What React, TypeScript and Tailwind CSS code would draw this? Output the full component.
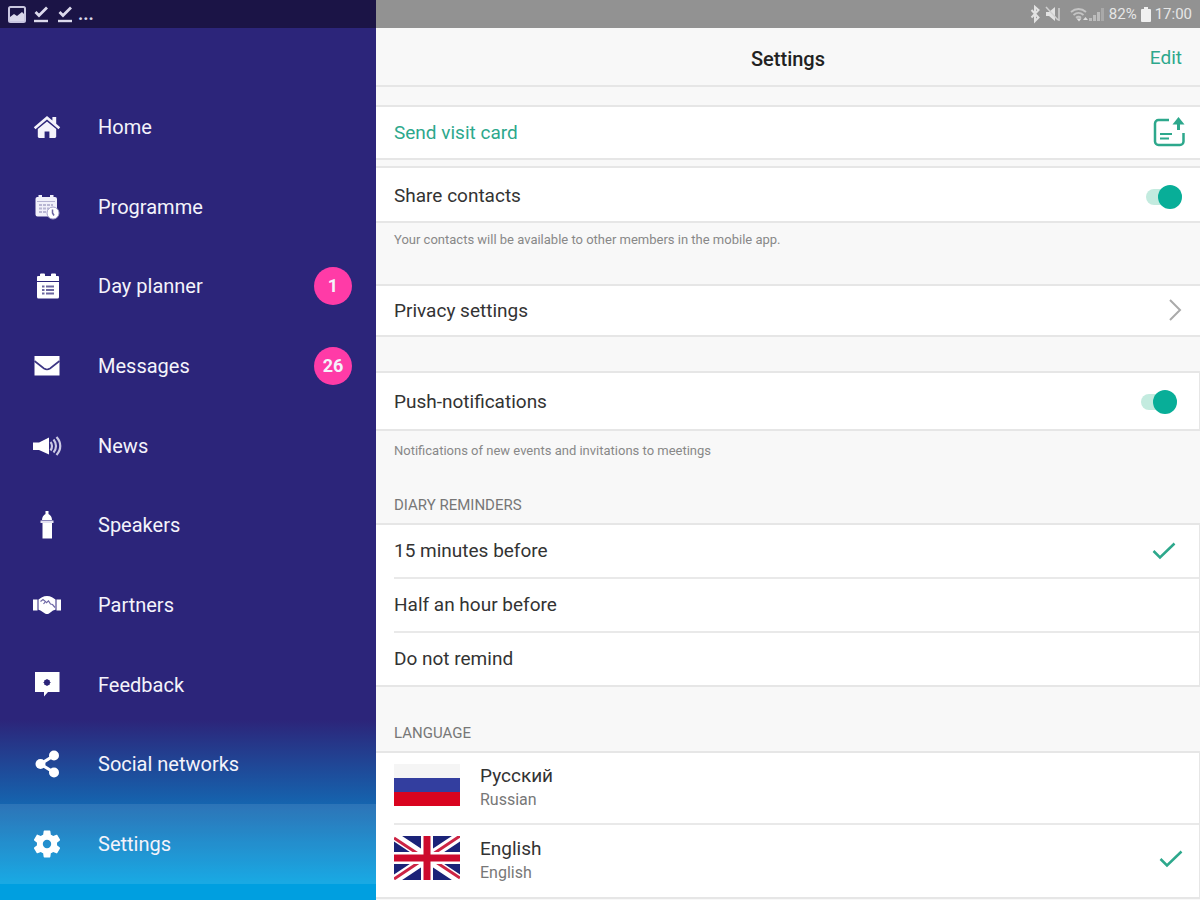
import React, { useState } from "react";
import { clsx } from "clsx";

interface IconProps {
  className?: string;
}

interface NavItem {
  label: string;
  href: string;
  icon: React.FC<IconProps>;
  badge?: number;
}

const HomeIcon: React.FC<IconProps> = ({ className }) => (
  <svg viewBox="-1 -2 30 28" className={className} fill="currentColor" aria-hidden="true">
    <path d="M14 1 .8 12.2l1.700 2L14 4.500l11.500 9.700 1.700-2-4-3.400V2h-3.800v3.600z" />
    <path d="M14 6.400 4.800 14v7.600c0 .8.6 1.400 1.400 1.400h5.400v-6.600h4.800V23h5.400c.8 0 1.400-.6 1.400-1.400V14z" />
  </svg>
);

const ProgrammeIcon: React.FC<IconProps> = ({ className }) => (
  <svg viewBox="-1 -1 28 28" className={className} aria-hidden="true">
    <path
      fill="#f1f0fa"
      d="M3 3h1.500V1H8v2h8V1h3.500v2H21a2 2 0 0 1 2 2v15.500a2 2 0 0 1-2 2H3.500a2 2 0 0 1-2-2V5a2 2 0 0 1 1.500-2z"
    />
    <path stroke="#b5b2d2" d="M3 7.500h18" />
    <path stroke="#b9b6d3" strokeWidth="2" strokeDasharray="3 1" d="M5 11h14M5 14.500h10M5 18h8" />
    <circle cx="19" cy="19" r="6" fill="#fff" stroke="#a5a1ca" strokeWidth="1" />
    <path fill="none" stroke="#6a649f" strokeWidth="1.500" d="M18.500 15.500V19l1.500 2.500" />
  </svg>
);

const PlannerIcon: React.FC<IconProps> = ({ className }) => (
  <svg viewBox="-1 -1 24 28" className={className} aria-hidden="true">
    <path
      fill="#fff"
      d="M2 3h2V1.500a1 1 0 0 1 1-1h3a1 1 0 0 1 1 1V3h6V1.500a1 1 0 0 1 1-1h3a1 1 0 0 1 1 1V3h2a1 1 0 0 1 1 1v4H1V4a1 1 0 0 1 1-1zM1 9h22v15a1.500 1.500 0 0 1-1.500 1.500h-19A1.500 1.500 0 0 1 1 24z"
    />
    <path stroke="#6b669f" strokeWidth="2" d="M6 13.500h2.500M10 13.500h8M6 17h2.500M10 17h8M6 20.500h2.500M10 20.500h8" />
  </svg>
);

const MailIcon: React.FC<IconProps> = ({ className }) => (
  <svg viewBox="-2 -4 30 28" className={className} aria-hidden="true">
    <path fill="#fff" d="M.5 0h25v19.500H.5z" />
    <path fill="none" stroke="#3d3684" strokeWidth="1.600" d="m.5 5 9.500 7.500c2 1.300 4 1.300 6 0L25.500 5" />
  </svg>
);

const NewsIcon: React.FC<IconProps> = ({ className }) => (
  <svg viewBox="0 0 30 20" className={className} aria-hidden="true">
    <path fill="#fff" d="M1 6.500h6L17 1.500v17L7 14H1z" />
    <path fill="none" stroke="#cbc9e4" strokeWidth="2.200" d="M18.500 6c2 2 2 6 0 8.500M21.500 3.500c3.300 3.800 3.300 9.500 0 13M24.500 1c5 5.500 5 12.500 0 18" />
  </svg>
);

const SpeakersIcon: React.FC<IconProps> = ({ className }) => (
  <svg viewBox="0 0 14 28" className={className} aria-hidden="true">
    <path fill="#fff" d="M5.500 0h3v3c2 1 3.500 3 3.500 6H2c0-3 1.500-5 3.500-6z" />
    <path fill="#e4e2f2" d="M.5 9.500h13V12H.5z" />
    <path fill="#fff" d="M2.500 12h9.500v15.500H2.500z" />
  </svg>
);

const PartnersIcon: React.FC<IconProps> = ({ className }) => (
  <svg viewBox="0 0 30 20" className={className} aria-hidden="true">
    <path fill="#fff" d="M1 4.500h4.500v11H1zM24.500 4.500H29v11h-4.500z" />
    <path
      fill="#fff"
      d="M6.500 4.500 10 2.300c3-1.600 7-1.600 10 0l3.500 2.200v10.300l-2.500.7-4 3c-1.300.8-2.700.8-4 0l-4.500-3-2-.7z"
    />
    <path fill="none" stroke="#6f69a6" strokeWidth="1.200" d="m8.500 6.500 2.500-2 2.500 2-2 2.500M14 8l2.500-2 2 3 2 .5 2.500 3" />
  </svg>
);

const FeedbackIcon: React.FC<IconProps> = ({ className }) => (
  <svg viewBox="-1 0 28 28" className={className} aria-hidden="true">
    <path fill="#fff" d="M1 1h24.500v20H14l-4 4.500V21H1z" />
    <circle cx="13" cy="11.500" r="3" fill="#2c257a" />
    <path stroke="#2c257a" d="M13 8v7M9.500 11.500h7M10.800 9.300l4.400 4.400M15.200 9.300l-4.400 4.400" />
  </svg>
);

const ShareIcon: React.FC<IconProps> = ({ className }) => (
  <svg viewBox="-1 0 26 28" className={className} aria-hidden="true">
    <path fill="none" stroke="#fff" strokeWidth="3.200" d="M19 5.500 5.500 14 19 22.500" />
    <circle cx="19" cy="5.500" r="5" fill="#fff" />
    <circle cx="5.500" cy="14" r="5" fill="#fff" />
    <circle cx="19" cy="22.500" r="5" fill="#fff" />
  </svg>
);

const GearIcon: React.FC<IconProps> = ({ className }) => (
  <svg viewBox="2 2 20 20" className={className} fill="#fff" aria-hidden="true">
    <path d="M19.140 12.940c.04-.3.060-.61.060-.94 0-.32-.02-.64-.07-.94l2.030-1.580c.18-.14.230-.41.120-.61l-1.920-3.320c-.12-.22-.37-.29-.59-.22l-2.390.96c-.5-.38-1.030-.7-1.620-.94l-.36-2.540c-.04-.24-.24-.41-.48-.41h-3.840c-.24 0-.43.170-.47.410l-.36 2.540c-.59.240-1.130.570-1.620.940l-2.390-.96c-.22-.08-.47 0-.59.220L2.740 8.870c-.12.210-.08.470.12.610l2.030 1.580c-.05.3-.09.630-.09.940s.02.640.070.940l-2.030 1.580c-.18.140-.23.410-.12.610l1.920 3.320c.12.220.37.290.59.220l2.390-.96c.5.380 1.030.7 1.620.940l.36 2.540c.05.240.24.410.48.410h3.840c.24 0 .44-.17.470-.41l.36-2.540c.59-.24 1.130-.56 1.620-.94l2.390.96c.22.080.47 0 .59-.22l1.920-3.320c.12-.22.070-.47-.12-.61l-2.010-1.580zM12 15a3 3 0 1 1 0-6 3 3 0 0 1 0 6z" />
  </svg>
);

const CheckIcon: React.FC<IconProps> = ({ className }) => (
  <svg viewBox="0 0 24 18" className={className} fill="none" aria-hidden="true">
    <path stroke="#2da88c" strokeWidth="2.500" d="m1.500 9 6.500 6.500L22.500 1.500" />
  </svg>
);

const VisitCardIcon: React.FC<IconProps> = ({ className }) => (
  <svg viewBox="0 0 32 30" className={className} fill="none" stroke="#2da88c" aria-hidden="true">
    <path strokeWidth="2.500" d="M16 3H5.500A3.500 3.500 0 0 0 2 6.500v18A3.500 3.500 0 0 0 5.500 28H27a3.500 3.500 0 0 0 3.500-3.500V16" />
    <path strokeWidth="2" d="M7 17h12M7 21.500h9" />
    <path strokeWidth="3" d="M25.500 13V3" />
    <path fill="#2da88c" stroke="none" d="m25.500 0 6 7.500h-12z" />
  </svg>
);

const PictureIcon: React.FC<IconProps> = ({ className }) => (
  <svg viewBox="0 0 18 17" className={className} fill="none" aria-hidden="true">
    <rect x="1" y="1" width="16" height="15" rx="1.500" stroke="#c9c6e0" strokeWidth="2" />
    <path fill="#d9d7ea" d="M2 14v-3l4-3 3 2 5-4 2 2v7H2z" />
  </svg>
);

const DoneIcon: React.FC<IconProps> = ({ className }) => (
  <svg viewBox="0 0 14 17" className={className} fill="none" stroke="#dcdaec" aria-hidden="true">
    <path strokeWidth="2.800" d="m1.500 6 3.500 3.500L13 1.500" />
    <path strokeWidth="2.400" d="M0 15h14" />
  </svg>
);

const StatusIcons: React.FC = () => (
  <svg viewBox="0 0 76 20" className="h-5 w-[76px]" fill="none" aria-hidden="true">
    <path stroke="#e2e2e2" strokeWidth="2" d="m2.500 6 7 7.500-3.500 3.500V3l3.500 3-7 7.500" />
    <path fill="#e2e2e2" d="M17 8h3l6-5v14l-6-5h-3z" />
    <path stroke="#d0d0d0" strokeWidth="1.500" d="M30 4v13M17 3l12 13" />
    <path stroke="#c4c4c4" strokeWidth="1.800" d="M42 8c4.500-4 10.500-4 15 0M44.500 11c3-2.500 7-2.500 10 0M47 13.800c1.500-1.200 3.500-1.200 5 0" />
    <path fill="#dcdcdc" d="m47.500 14.500 2.500 3 2.500-3zM54 16l2.500-3 2.500 3z" />
    <path fill="#bcbcbc" d="M60 17v-3h3v3zM64 17v-6h3v6zM68 17V8h3v9z" />
    <path fill="#a9a9a9" d="M72 17V4h3v13z" />
  </svg>
);

const BatteryIcon: React.FC<IconProps> = ({ className }) => (
  <svg viewBox="0 0 10 15" className={className} fill="#f0f0f0" aria-hidden="true">
    <path d="M3 0h4v2h2a1 1 0 0 1 1 1v11a1 1 0 0 1-1 1H1a1 1 0 0 1-1-1V3a1 1 0 0 1 1-1h2z" />
  </svg>
);

const RussianFlag: React.FC = () => (
  <svg viewBox="0 0 66 42" className="mb-1.5 h-[42px] w-[66px] shrink-0" aria-hidden="true">
    <path fill="#f5f5f5" d="M0 0h66v14H0z" />
    <path fill="#333e9f" d="M0 14h66v14H0z" />
    <path fill="#d9041f" d="M0 28h66v14H0z" />
  </svg>
);

const BritishFlag: React.FC = () => (
  <svg viewBox="0 0 66 44" className="mb-1.5 h-11 w-[66px] shrink-0" aria-hidden="true">
    <path fill="#1b2378" d="M0 0h66v44H0z" />
    <path stroke="#fff" strokeWidth="9" d="m0 0 66 44M66 0 0 44" />
    <path stroke="#cc2444" strokeWidth="3" d="m0 2 31 20.500M66 42 35 21.500M66 0 36 20M0 43l30-20" />
    <path stroke="#fff" strokeWidth="12" d="M33 0v44M0 22h66" />
    <path stroke="#cd0a2d" strokeWidth="7" d="M33 0v44M0 22h66" />
  </svg>
);

const navItems: NavItem[] = [
  { label: "Home", href: "#home", icon: HomeIcon },
  { label: "Programme", href: "#programme", icon: ProgrammeIcon },
  { label: "Day planner", href: "#planner", icon: PlannerIcon, badge: 1 },
  { label: "Messages", href: "#messages", icon: MailIcon, badge: 26 },
  { label: "News", href: "#news", icon: NewsIcon },
  { label: "Speakers", href: "#speakers", icon: SpeakersIcon },
  { label: "Partners", href: "#partners", icon: PartnersIcon },
  { label: "Feedback", href: "#feedback", icon: FeedbackIcon },
  { label: "Social networks", href: "#social", icon: ShareIcon },
  { label: "Settings", href: "#settings", icon: GearIcon },
];

const reminders = ["15 minutes before", "Half an hour before", "Do not remind"];

const languages = [
  { name: "Русский", english: "Russian", flag: RussianFlag },
  { name: "English", english: "English", flag: BritishFlag },
];

const Sidebar: React.FC = () => (
  <aside className="flex w-[376px] shrink-0 flex-col bg-[linear-gradient(to_bottom,#2c257a_80%,#009fe0_98%)] text-[#f4f3fb]">
    <div className="flex h-7 items-center bg-[#1b1446] pl-2 text-lg leading-7 font-bold text-[#dcdaec]">
      <PictureIcon className="h-[17px] w-[18px]" />
      <DoneIcon className="ml-2 h-[17px] w-[14px]" />
      <DoneIcon className="ml-[10px] h-[17px] w-[14px]" />
      <span className="ml-1.5">...</span>
    </div>
    <nav className="flex flex-1 flex-col pt-[59px] pb-4">
      {navItems.map(({ label, href, icon: Icon, badge }) => (
        <a
          key={label}
          href={href}
          className={clsx(
            "flex min-h-12 flex-1 items-center gap-9 pr-6 pl-8",
            label === "Settings" && "bg-white/10"
          )}
        >
          <Icon className="h-7 w-[30px]" />
          <span className="flex-1 text-xl">{label}</span>
          {badge && (
            <span className="flex size-[38px] items-center justify-center rounded-full bg-[#ff3ba7] text-lg font-bold">
              {badge}
            </span>
          )}
        </a>
      ))}
    </nav>
  </aside>
);

interface SwitchProps {
  id: string;
  checked: boolean;
  onChange: (checked: boolean) => void;
}

const Switch: React.FC<SwitchProps> = ({ id, checked, onChange }) => (
  <input
    id={id}
    type="checkbox"
    role="switch"
    checked={checked}
    onChange={(e) => onChange(e.target.checked)}
    className="relative h-4 w-9 appearance-none rounded-full bg-[#d0d0d0] after:absolute after:-top-1 after:left-0 after:size-6 after:rounded-full after:bg-white after:shadow checked:bg-[#c3ebdf] checked:after:right-0 checked:after:left-auto checked:after:bg-[#08ae98] checked:after:shadow-none"
  />
);

const App: React.FC = () => {
  const [shareContacts, setShareContacts] = useState(true);
  const [push, setPush] = useState(true);
  const [reminder, setReminder] = useState(reminders[0]);
  const [language, setLanguage] = useState("English");

  return (
    <div className="flex min-h-screen bg-[#f8f8f8] font-['Roboto',sans-serif] text-[#333]">
      <Sidebar />
      <main className="flex min-w-0 flex-1 flex-col">
        <div className="flex h-7 items-center justify-end bg-[#929292] pr-2 text-[15px] text-[#e6e6e6]">
          <StatusIcons />
          <span className="ml-1">82%</span>
          <BatteryIcon className="mx-1 h-[15px] w-[10px]" />
          <span>17:00</span>
        </div>

        <header className="grid h-[59px] grid-cols-[1fr_auto_1fr] items-center border-b-2 border-[#e6e6e6] px-[18px] pt-1">
          <h1 className="col-start-2 text-xl font-medium text-[#222]">Settings</h1>
          <button type="button" className="justify-self-end text-[19px] text-[#2da88c]">
            Edit
          </button>
        </header>

        <button
          type="button"
          className="mt-[18px] flex h-[55px] items-center justify-between border-y-2 border-[#e6e6e6] bg-white pt-0.5 pr-[15px] pl-[18px] text-[19px] text-[#2da88c]"
        >
          Send visit card
          <VisitCardIcon className="mb-1 h-[30px] w-8" />
        </button>

        <div className="mt-[6px] flex h-[57px] items-center justify-between border-y-2 border-[#e6e6e6] bg-white px-[18px] pt-1 text-[19px]">
          <label htmlFor="share">Share contacts</label>
          <Switch id="share" checked={shareContacts} onChange={setShareContacts} />
        </div>
        <p className="h-[61px] px-[18px] pt-2 text-[13px] leading-[18px] text-[#888]">
          Your contacts will be available to other members in the mobile app.
        </p>

        <a
          href="#privacy"
          className="flex h-[53px] items-center justify-between border-y-2 border-[#e6e6e6] bg-white px-[18px] pt-0.5 text-[19px]"
        >
          Privacy settings
          <svg viewBox="0 0 14 22" className="mb-1 h-[22px] w-[14px]" fill="none" aria-hidden="true">
            <path stroke="#aaa" strokeWidth="2" d="m2 1 10 10L2 21" />
          </svg>
        </a>

        <div className="mt-[34px] flex h-[60px] items-center justify-between border-y-2 border-r border-[#e6e6e6] bg-white pt-0.5 pr-[22px] pl-[18px] text-[19px]">
          <label htmlFor="push">Push-notifications</label>
          <Switch id="push" checked={push} onChange={setPush} />
        </div>
        <p className="px-[18px] pt-[11px] text-[13px] leading-[18px] text-[#888]">
          Notifications of new events and invitations to meetings
        </p>

        <h2 id="reminders" className="px-[18px] pt-[35px] pb-2 text-[15px] leading-5 text-[#777]">
          DIARY REMINDERS
        </h2>
        <div role="radiogroup" aria-labelledby="reminders" className="border-y-2 border-r border-[#e6e6e6] bg-white pl-[18px] text-[19px]">
          {reminders.map((item) => (
            <label
              key={item}
              className="relative flex h-[54px] items-center justify-between border-b-2 border-[#e9e9e9] pr-[23px] last:h-[52px] last:border-b-0"
            >
              <input
                type="radio"
                name="reminder"
                className="peer sr-only"
                checked={reminder === item}
                onChange={() => setReminder(item)}
              />
              {item}
              <CheckIcon className="invisible h-[18px] w-6 peer-checked:visible" />
            </label>
          ))}
        </div>

        <h2 id="language" className="px-[18px] pt-9 pb-2 text-[15px] leading-5 text-[#777]">
          LANGUAGE
        </h2>
        <div role="radiogroup" aria-labelledby="language" className="border-y-2 border-r border-[#e6e6e6] bg-white pl-[18px]">
          {languages.map(({ name, english, flag: Flag }) => (
            <label
              key={name}
              className="relative flex h-[72px] items-center gap-5 border-b-2 border-[#e9e9e9] pr-4 last:border-b-0"
            >
              <input
                type="radio"
                name="language"
                className="peer sr-only"
                checked={language === name}
                onChange={() => setLanguage(name)}
              />
              <Flag />
              <span className="flex flex-1 flex-col">
                <span className="text-[19px] leading-6">{name}</span>
                <span className="text-base leading-6 text-[#777]">{english}</span>
              </span>
              <CheckIcon className="invisible mb-1 h-[18px] w-6 peer-checked:visible" />
            </label>
          ))}
        </div>
      </main>
    </div>
  );
};

export default App;
